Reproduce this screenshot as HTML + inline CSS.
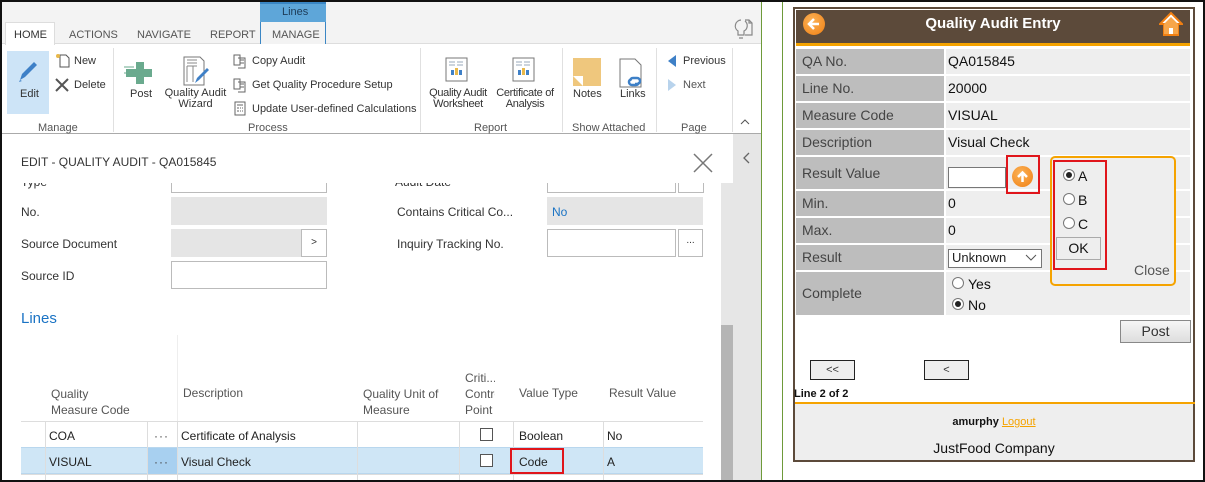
<!DOCTYPE html>
<html><head><meta charset="utf-8"><style>
*{box-sizing:border-box;margin:0;padding:0}
body{width:1205px;height:482px;background:#fff;font-family:"Liberation Sans",sans-serif;font-size:12px;color:#333;position:relative;overflow:hidden}
.a{position:absolute}
.t{position:absolute;white-space:nowrap}
.rb{font-size:11px}
.in{position:absolute;border:1px solid #bbb;background:#fff}
.gr{position:absolute;background:#e5e5e5}
.rl{position:absolute;left:796px;width:148px;background:#bdbdbd;font-size:14px;color:#444;padding-left:6px}
.rv{position:absolute;left:946px;width:244px;background:#eee;font-size:14px;color:#111;padding-left:2px}
.rad{position:absolute;width:12px;height:12px;border:1px solid #777;border-radius:50%;background:#fff}
.rad.on::after{content:"";position:absolute;left:2px;top:2px;width:6px;height:6px;border-radius:50%;background:#222}
.btn{position:absolute;border:1px solid #888;background:linear-gradient(#f6f6f6,#ddd);text-align:center;font-size:14px}
</style></head><body>
<div class="a" style="left:0;top:0;width:1205px;height:482px;border:2px solid #111;z-index:50;pointer-events:none"></div>

<div class="a" style="left:2px;top:2px;width:759px;height:42px;background:#f3f3f3;border-bottom:1px solid #ddd"></div>
<div class="a" style="left:5px;top:22px;width:50px;height:23px;background:#fff;border:1px solid #ddd;border-bottom:none"></div>
<div class="t rb" style="left:14px;top:29px;color:#333">HOME</div>
<div class="t rb" style="left:69px;top:29px;color:#555">ACTIONS</div>
<div class="t rb" style="left:137px;top:29px;color:#555">NAVIGATE</div>
<div class="t rb" style="left:210px;top:29px;color:#555">REPORT</div>
<div class="a" style="left:260px;top:2px;width:66px;height:20px;background:#5ea6d9;border-top:2px solid #3a86c4"></div>
<div class="t rb" style="left:282px;top:6px;color:#1d3b57">Lines</div>
<div class="a" style="left:260px;top:22px;width:66px;height:22px;border-left:1px solid #3a86c4;border-right:1px solid #3a86c4;background:#f3f3f3"></div>
<div class="t rb" style="left:272px;top:29px;color:#555">MANAGE</div>
<svg class="a" style="left:730px;top:17px" width="24" height="24" viewBox="0 0 24 24" fill="none" stroke="#888" stroke-width="1.2"><path d="M9 21h4M8 18h6M11 3a6 6 0 0 0-3 11v4h6v-4a6 6 0 0 0 1-10M15 3h4l3 3v12h-7"/><path d="M19 3v3h3"/></svg>

<div class="a" style="left:2px;top:133px;width:759px;height:1px;background:#aaa"></div>
<div class="a" style="left:7px;top:51px;width:42px;height:63px;background:#cde4f7"></div>
<svg class="a" style="left:16px;top:58px" width="24" height="26" viewBox="0 0 24 26"><path d="M4 22l2-6L18 4l3 3L9 19z" fill="#3e80c7"/><path d="M3 24l1-2 2 1z" fill="#3e80c7"/></svg>
<div class="t rb" style="left:20px;top:88px">Edit</div>
<div class="t rb" style="left:74px;top:55px">New</div>
<svg class="a" style="left:54px;top:52px" width="16" height="16"><path d="M6 3h6l3 3v9H6z" fill="#fff" stroke="#555"/><circle cx="4" cy="4" r="2" fill="#e8b84a"/></svg>
<div class="t rb" style="left:74px;top:79px">Delete</div>
<svg class="a" style="left:54px;top:77px" width="16" height="16"><path d="M2 2l12 12M14 2L2 14" stroke="#555" stroke-width="2"/></svg>
<div class="a" style="left:113px;top:48px;width:1px;height:84px;background:#e0e0e0"></div>
<svg class="a" style="left:123px;top:58px" width="32" height="26"><path d="M13 4h8v7h8v8h-8v7h-8v-7H3v-8h10z" fill="#6aaa8e"/><path d="M1 9h10M3 12h8M1 15h10" stroke="#6aaa8e"/></svg>
<div class="t rb" style="left:130px;top:88px">Post</div>
<svg class="a" style="left:182px;top:55px" width="30" height="32"><path d="M2 2h16l4 4v24H2z" fill="#fff" stroke="#777"/><path d="M5 5h10M5 8h10M5 11v16M11 11v16M5 11h10" stroke="#888"/><path d="M13 28l2-5 10-10 2 2-10 10z" fill="#3e80c7"/></svg>
<div class="t rb" style="left:164px;top:88px;width:63px;text-align:center;line-height:11px">Quality Audit<br>Wizard</div>
<div class="t rb" style="left:252px;top:55px">Copy Audit</div>
<div class="t rb" style="left:252px;top:79px">Get Quality Procedure Setup</div>
<div class="t rb" style="left:252px;top:103px">Update User-defined Calculations</div>
<svg class="a" style="left:232px;top:53px" width="16" height="72" fill="none" stroke="#666"><path d="M2 2h6v10H2zM6 5h7v10H6M8 7h4M8 10h4"/><path d="M2 26h6v10H2zM6 29h7v10H6M8 31h4M8 34h4"/><rect x="3" y="49" width="10" height="13"/><path d="M5 52h6M5 55h2M8 55h1M10 55h1M5 58h2M8 58h1M10 58h1"/></svg>
<div class="t rb" style="left:38px;top:122px;color:#555">Manage</div>
<div class="t rb" style="left:248px;top:122px;color:#555">Process</div>
<div class="a" style="left:420px;top:48px;width:1px;height:84px;background:#e0e0e0"></div>
<svg class="a" style="left:445px;top:57px" width="24" height="26"><rect x="1" y="1" width="21" height="23" fill="#fff" stroke="#777"/><path d="M4 5h6M12 5h6M4 8h6M12 8h6" stroke="#9ab"/><path d="M6 18v-5h3v5zM14 18v-5h3v5z" fill="#3e80c7"/><rect x="10" y="11" width="3" height="7" fill="#e8b84a"/></svg>
<svg class="a" style="left:512px;top:57px" width="24" height="26"><rect x="1" y="1" width="21" height="23" fill="#fff" stroke="#777"/><path d="M4 5h6M12 5h6M4 8h6M12 8h6" stroke="#9ab"/><path d="M6 18v-5h3v5zM14 18v-5h3v5z" fill="#3e80c7"/><rect x="10" y="11" width="3" height="7" fill="#e8b84a"/></svg>
<div class="t rb" style="left:425px;top:88px;width:66px;line-height:11px;text-align:center;letter-spacing:-0.3px">Quality Audit<br>Worksheet</div>
<div class="t rb" style="left:493px;top:88px;width:64px;line-height:11px;text-align:center;letter-spacing:-0.3px">Certificate of<br>Analysis</div>
<div class="t rb" style="left:474px;top:122px;color:#555">Report</div>
<div class="a" style="left:562px;top:48px;width:1px;height:84px;background:#e0e0e0"></div>
<div class="a" style="left:573px;top:58px;width:28px;height:28px;background:#efc77d"></div>
<div class="a" style="left:573px;top:76px;width:10px;height:10px;background:#fff;clip-path:polygon(0 0,100% 0,100% 100%)"></div>
<svg class="a" style="left:618px;top:57px" width="28" height="32"><path d="M2 2h15l6 6v22H2z" fill="#fff" stroke="#777"/><path d="M12 24a3 3 0 0 1 3-3h4a3 3 0 0 1 0 6h-2M21 25a3 3 0 0 1-3 3h-4a3 3 0 0 1 0-6" stroke="#3e80c7" stroke-width="2.5" fill="none"/></svg>
<div class="t rb" style="left:573px;top:88px">Notes</div>
<div class="t rb" style="left:620px;top:88px">Links</div>
<div class="t rb" style="left:572px;top:122px;color:#555">Show Attached</div>
<div class="a" style="left:656px;top:48px;width:1px;height:84px;background:#e0e0e0"></div>
<div class="a" style="left:668px;top:55px;width:0;height:0;border:6px solid transparent;border-right:8px solid #3e80c7;border-left:none"></div>
<div class="t rb" style="left:683px;top:55px">Previous</div>
<div class="a" style="left:668px;top:79px;width:0;height:0;border:6px solid transparent;border-left:8px solid #b8d3ec;border-right:none"></div>
<div class="t rb" style="left:683px;top:79px;color:#555">Next</div>
<div class="t rb" style="left:681px;top:122px;color:#555">Page</div>
<div class="a" style="left:732px;top:48px;width:1px;height:84px;background:#e0e0e0"></div>
<svg class="a" style="left:740px;top:119px" width="10" height="6"><path d="M1 5l4-4 4 4" stroke="#555" fill="none"/></svg>

<div class="a" style="left:733px;top:134px;width:28px;height:348px;background:#e6e6e6"></div>
<div class="a" style="left:721px;top:183px;width:12px;height:299px;background:#e6e6e6"></div>
<div class="a" style="left:721px;top:325px;width:12px;height:157px;background:#b5b5b5"></div>
<svg class="a" style="left:742px;top:152px" width="8" height="12"><path d="M7 1L2 6l5 5" stroke="#666" stroke-width="1.3" fill="none"/></svg>
<div class="a" style="left:761px;top:0;width:1px;height:482px;background:#6e9a3a"></div>
<div class="a" style="left:782px;top:0;width:1px;height:482px;background:#6e9a3a"></div>
<div class="t" style="left:21px;top:155px;font-size:12px;color:#333">EDIT - QUALITY AUDIT - QA015845</div>
<svg class="a" style="left:693px;top:153px" width="20" height="20"><path d="M1 1l18 18M19 1L1 19" stroke="#777" stroke-width="1.5"/></svg>
<div class="a" style="left:2px;top:183px;width:719px;height:299px;overflow:hidden">
 <div class="t" style="left:19px;top:-8px">Type</div>
 <div class="in" style="left:169px;top:-10px;width:156px;height:20px"></div>
 <div class="t" style="left:393px;top:-8px">Audit Date</div>
 <div class="in" style="left:545px;top:-10px;width:129px;height:20px"></div>
 <div class="in" style="left:676px;top:-10px;width:26px;height:20px"></div>
</div>
<div class="t" style="left:21px;top:205px">No.</div>
<div class="gr" style="left:171px;top:197px;width:156px;height:28px"></div>
<div class="t" style="left:21px;top:237px">Source Document</div>
<div class="gr" style="left:171px;top:229px;width:130px;height:28px"></div>
<div class="in" style="left:301px;top:229px;width:26px;height:28px;text-align:center;line-height:25px;font-size:10px">&gt;</div>
<div class="t" style="left:21px;top:269px">Source ID</div>
<div class="in" style="left:171px;top:261px;width:156px;height:28px"></div>
<div class="t" style="left:397px;top:205px">Contains Critical Co...</div>
<div class="gr" style="left:547px;top:197px;width:156px;height:28px"></div>
<div class="t" style="left:552px;top:205px;color:#1a73c4">No</div>
<div class="t" style="left:397px;top:237px">Inquiry Tracking No.</div>
<div class="in" style="left:547px;top:229px;width:129px;height:28px"></div>
<div class="in" style="left:678px;top:229px;width:25px;height:28px;text-align:center;line-height:22px;font-size:10px">...</div>
<div class="t" style="left:21px;top:310px;font-size:15px;color:#1a73c4">Lines</div>
<div class="a" style="left:177px;top:335px;width:1px;height:86px;background:#eee"></div>
<div class="t" style="left:51px;top:386px;line-height:16px;color:#555">Quality<br>Measure Code</div>
<div class="t" style="left:183px;top:386px;color:#555">Description</div>
<div class="t" style="left:363px;top:386px;line-height:16px;color:#555">Quality Unit of<br>Measure</div>
<div class="t" style="left:465px;top:370px;line-height:16px;color:#555;width:30px;overflow:hidden">Criti...<br>Contro<br>Point</div>
<div class="t" style="left:519px;top:386px;color:#555">Value Type</div>
<div class="t" style="left:609px;top:386px;color:#555">Result Value</div>
<div class="a" style="left:21px;top:421px;width:682px;height:1px;background:#ddd"></div>
<div class="a" style="left:21px;top:447px;width:682px;height:27px;background:#cfe6f6;border-top:1px solid #b9d7ee;border-bottom:1px solid #b9d7ee"></div>
<div class="a" style="left:147px;top:448px;width:30px;height:26px;background:#a8d0f0"></div>
<div class="a" style="left:21px;top:474px;width:682px;height:1px;background:#ddd"></div>
<div class="a" style="left:45px;top:422px;width:1px;height:60px;background:#ddd"></div>
<div class="a" style="left:147px;top:422px;width:1px;height:60px;background:#ddd"></div>
<div class="a" style="left:177px;top:422px;width:1px;height:60px;background:#ddd"></div>
<div class="a" style="left:357px;top:422px;width:1px;height:60px;background:#ddd"></div>
<div class="a" style="left:459px;top:422px;width:1px;height:60px;background:#ddd"></div>
<div class="a" style="left:513px;top:422px;width:1px;height:60px;background:#ddd"></div>
<div class="a" style="left:603px;top:422px;width:1px;height:60px;background:#ddd"></div>
<div class="t" style="left:49px;top:429px;color:#222">COA</div>
<div class="t" style="left:154px;top:429px;color:#444;letter-spacing:1px">&middot;&middot;&middot;</div>
<div class="t" style="left:181px;top:429px;color:#222">Certificate of Analysis</div>
<div class="a" style="left:480px;top:428px;width:13px;height:13px;border:1px solid #555;background:#fff"></div>
<div class="t" style="left:519px;top:429px;color:#222">Boolean</div>
<div class="t" style="left:607px;top:429px;color:#222">No</div>
<div class="t" style="left:49px;top:455px;color:#222">VISUAL</div>
<div class="t" style="left:154px;top:455px;color:#444;letter-spacing:1px">&middot;&middot;&middot;</div>
<div class="t" style="left:181px;top:455px;color:#222">Visual Check</div>
<div class="a" style="left:480px;top:454px;width:13px;height:13px;border:1px solid #555;background:#fff"></div>
<div class="t" style="left:519px;top:455px;color:#222">Code</div>
<div class="a" style="left:510px;top:448px;width:54px;height:26px;border:2px solid #e0151b"></div>
<div class="t" style="left:607px;top:455px;color:#222">A</div>

<div class="a" style="left:793px;top:7px;width:402px;height:455px;border:2px solid #5c4a3a"></div>
<div class="a" style="left:796px;top:10px;width:394px;height:33px;background:#5c4a3a"></div>
<div class="a" style="left:796px;top:43px;width:394px;height:3px;background:#f5a300"></div>
<div class="t" style="left:796px;top:15px;width:394px;text-align:center;color:#fff;font-weight:bold;font-size:15px">Quality Audit Entry</div>
<div class="a" style="left:803px;top:13px;width:22px;height:22px;border-radius:50%;background:radial-gradient(circle at 40% 35%,#fbb257,#f07f12)"></div>
<svg class="a" style="left:806px;top:16px" width="16" height="16"><path d="M13 8H4M8 3L3 8l5 5" stroke="#fff" stroke-width="2.5" fill="none"/></svg>
<svg class="a" style="left:1159px;top:11px" width="24" height="26"><path d="M12 2L1 13h4v11h14V13h4z" fill="#fff" stroke="#f07f12" stroke-width="2"/><path d="M5 13L12 6l7 7v10H5z" fill="#f7a64a"/><rect x="10" y="17" width="4" height="6" fill="#fff"/></svg>
<div class="rl" style="top:49px;height:25px;line-height:25px">QA No.</div><div class="rv" style="top:49px;height:25px;line-height:25px">QA015845</div>
<div class="rl" style="top:76px;height:25px;line-height:25px">Line No.</div><div class="rv" style="top:76px;height:25px;line-height:25px">20000</div>
<div class="rl" style="top:103px;height:25px;line-height:25px">Measure Code</div><div class="rv" style="top:103px;height:25px;line-height:25px">VISUAL</div>
<div class="rl" style="top:130px;height:25px;line-height:25px">Description</div><div class="rv" style="top:130px;height:25px;line-height:25px">Visual Check</div>
<div class="rl" style="top:157px;height:32px;line-height:32px">Result Value</div><div class="rv" style="top:157px;height:32px"></div>
<div class="rl" style="top:191px;height:25px;line-height:25px">Min.</div><div class="rv" style="top:191px;height:25px;line-height:25px">0</div>
<div class="rl" style="top:218px;height:25px;line-height:25px">Max.</div><div class="rv" style="top:218px;height:25px;line-height:25px">0</div>
<div class="rl" style="top:245px;height:25px;line-height:25px">Result</div><div class="rv" style="top:245px;height:25px"></div>
<div class="rl" style="top:272px;height:43px;line-height:43px">Complete</div><div class="rv" style="top:272px;height:43px"></div>
<div class="a" style="left:948px;top:167px;width:58px;height:21px;background:#fff;border:1px solid #777"></div>
<div class="a" style="left:1012px;top:166px;width:21px;height:21px;border-radius:50%;background:radial-gradient(circle at 40% 35%,#fbb257,#f07f12)"></div>
<svg class="a" style="left:1014px;top:168px" width="17" height="17"><path d="M8.5 14V5M4 9l4.5-4.5L13 9" stroke="#fff" stroke-width="2.5" fill="none"/></svg>
<div class="a" style="left:1006px;top:155px;width:34px;height:39px;border:2px solid #e0151b"></div>
<div class="a" style="left:948px;top:249px;width:94px;height:19px;background:#fff;border:1px solid #777"></div>
<div class="t" style="left:952px;top:250px;font-size:13px;color:#222">Unknown</div>
<svg class="a" style="left:1025px;top:254px" width="12" height="8"><path d="M1 1l5 5 5-5" stroke="#555" fill="none"/></svg>
<div class="rad" style="left:952px;top:277px"></div><div class="t" style="left:968px;top:276px;font-size:14px;color:#111">Yes</div>
<div class="rad on" style="left:952px;top:298px"></div><div class="t" style="left:968px;top:297px;font-size:14px;color:#111">No</div>
<div class="a" style="left:1050px;top:156px;width:126px;height:130px;border:2px solid #f5a300;border-radius:5px;background:#eee"></div>
<div class="a" style="left:1053px;top:160px;width:54px;height:110px;border:2px solid #e0151b"></div>
<div class="rad on" style="left:1063px;top:169px"></div><div class="t" style="left:1078px;top:168px;font-size:14px;color:#111">A</div>
<div class="rad" style="left:1063px;top:193px"></div><div class="t" style="left:1078px;top:192px;font-size:14px;color:#111">B</div>
<div class="rad" style="left:1063px;top:217px"></div><div class="t" style="left:1078px;top:216px;font-size:14px;color:#111">C</div>
<div class="a" style="left:1056px;top:237px;width:45px;height:23px;border:1px solid #aaa;background:#eee;text-align:center;line-height:21px;font-size:14px;color:#111">OK</div>
<div class="t" style="left:1134px;top:262px;font-size:14px;color:#555">Close</div>
<div class="btn" style="left:1120px;top:320px;width:71px;height:23px;line-height:21px">Post</div>
<div class="a" style="left:810px;top:360px;width:45px;height:20px;border:1px solid #222;background:#eee;text-align:center;font-size:11px;line-height:18px">&lt;&lt;</div>
<div class="a" style="left:924px;top:360px;width:45px;height:20px;border:1px solid #222;background:#eee;text-align:center;font-size:11px;line-height:18px">&lt;</div>
<div class="t" style="left:794px;top:388px;font-size:11px;font-weight:bold;color:#111">Line 2 of 2</div>
<div class="a" style="left:795px;top:402px;width:400px;height:2px;background:#f5a300"></div>
<div class="a" style="left:795px;top:404px;width:398px;height:56px;background:#eee"></div>
<div class="t" style="left:795px;top:416px;width:398px;text-align:center;font-size:11px"><b style="color:#111">amurphy</b> <span style="color:#f5a300;text-decoration:underline">Logout</span></div>
<div class="t" style="left:795px;top:440px;width:398px;text-align:center;font-size:14px;color:#111">JustFood Company</div>
</body></html>
